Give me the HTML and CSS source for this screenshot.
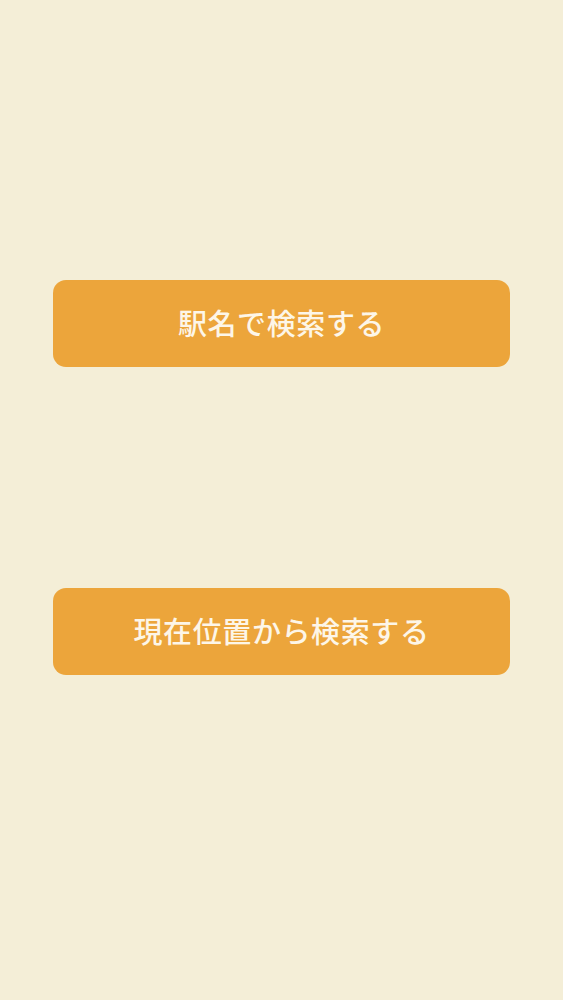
FILE: index.html
```html
<!DOCTYPE html>
<html>
<head>
<meta charset="UTF-8">
<title>検索</title>
<link rel="stylesheet" href="styles.css">
</head>
<body>

<div class="menu">
	<button type="button" class="btn">駅名で検索する</button>
	<button type="button" class="btn">現在位置から検索する</button>
</div>

</body>
</html>
```

FILE: styles.css
```css
* {box-sizing: border-box;}
html, body {margin: 0; padding: 0; background-color: #f4eed7;}
body {height: 1000px; font-family: "Noto Sans CJK JP", "Noto Sans", sans-serif;}
.menu {display: flex; flex-direction: column; gap: 221px; padding: 280px 53px 0 53px;}
.btn {height: 87px; padding: 0 0 4px 0; border: none; border-radius: 13px; background-color: #eca53b; color: #fdf6e8; font-family: "Noto Sans CJK JP", sans-serif; font-size: 29px; font-weight: 500; letter-spacing: 0.6px; cursor: pointer;}
```
